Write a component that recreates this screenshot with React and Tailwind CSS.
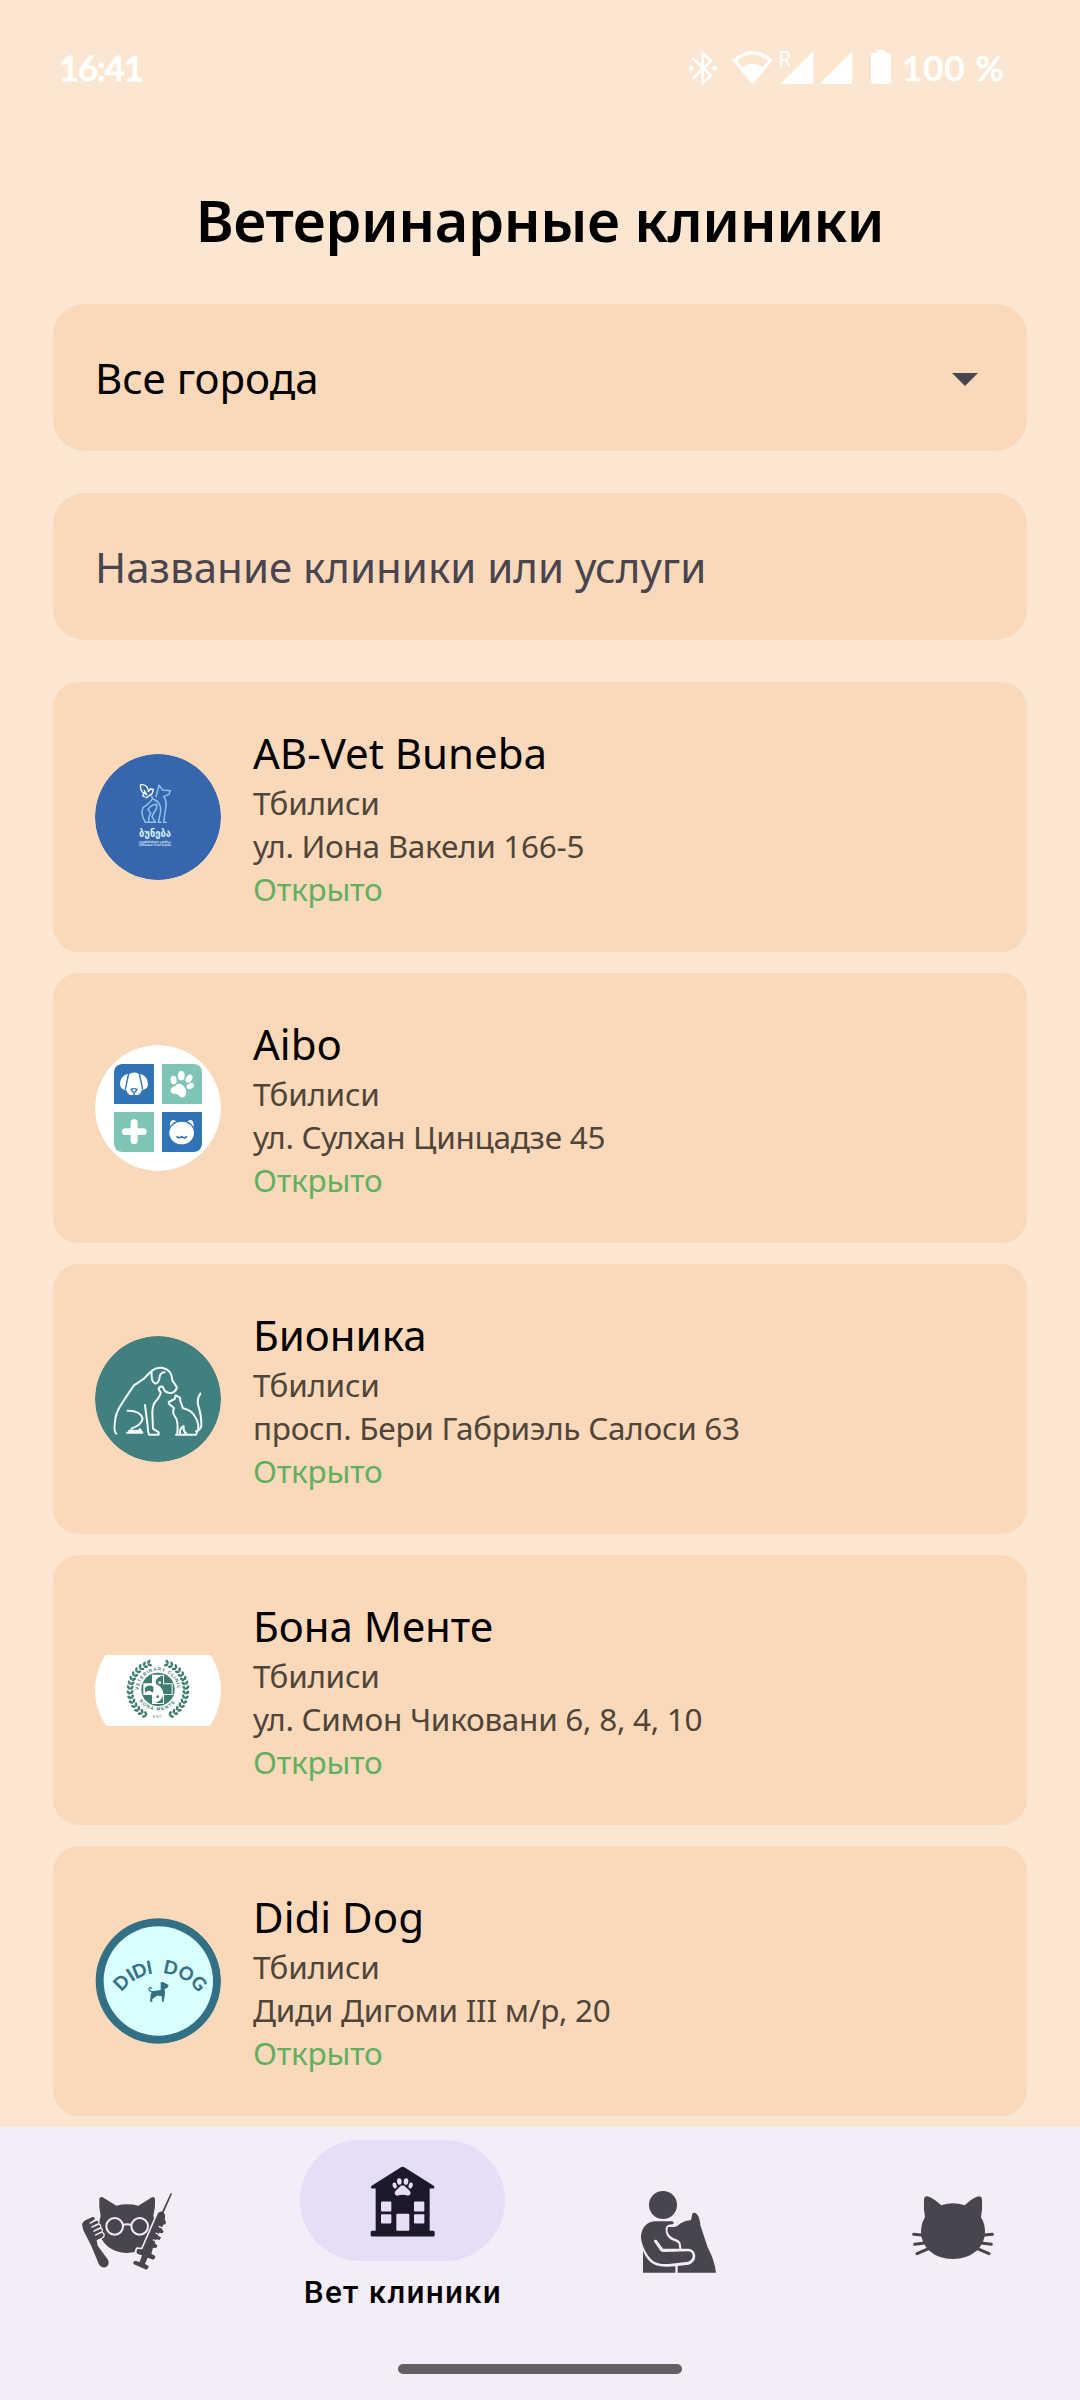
const NOTO = "font-['Noto_Sans',sans-serif]";

function StatusBar() {
  return (
    <div className="flex h-[136px] items-start pl-[59px] pt-[48px] font-['Lato',sans-serif] text-[34.5px] leading-[40px] text-white">
      <span className="w-[629px] font-semibold tracking-[-1px] [-webkit-text-stroke:0.9px_white]">16:41</span>
      <svg className="mt-[2px] h-[35px] w-[30px] shrink-0" viewBox="85 60 90 105" fill="none">
        <path d="M99 84L154 137L129 160V70L154 93L99 146" stroke="white" strokeWidth="8" />
        <circle cx="95" cy="115" r="7.5" fill="white" />
        <circle cx="165" cy="115" r="7.5" fill="white" />
      </svg>
      <svg className="ml-[14px] mt-[2px] h-[35px] w-[41px] shrink-0" viewBox="216 60 123 105" fill="none">
        <path d="M224 91Q277 45 331 91L278 155Z" stroke="white" strokeWidth="10" />
        <path d="M244 115Q277 88 312 115L278 161Z" fill="white" />
      </svg>
      <svg className="ml-[6px] h-[40px] w-[35px] shrink-0 overflow-visible" viewBox="356 54 105 120">
        <path d="M459 64V161H361Z" fill="white" />
        <text x="355" y="112" fontFamily="Roboto, sans-serif" fontSize="68" textLength="36" lengthAdjust="spacingAndGlyphs" fill="white">R</text>
      </svg>
      <svg className="ml-[5px] mt-[2px] h-[35px] w-[34px] shrink-0" viewBox="476 60 102 105">
        <path d="M576 64V161H478Z" fill="white" />
      </svg>
      <svg className="ml-[18px] mt-[2px] h-[35px] w-[20px] shrink-0" viewBox="633 60 60 105" fill="white">
        <path d="M651 60H675V69H686Q693 69 693 76V154Q693 161 686 161H640Q633 161 633 154V76Q633 69 640 69H651Z" />
      </svg>
      <span className="ml-[11px] whitespace-pre font-semibold tracking-[1.3px] [-webkit-text-stroke:0.7px_white]">100 %</span>
    </div>
  );
}

function Logo({ viewBox, children }) {
  return (
    <svg className="size-[126px] shrink-0 rounded-full" viewBox={viewBox}>
      {children}
    </svg>
  );
}

function BunebaLogo() {
  return (
    <Logo viewBox="45 42 378 378">
      <circle cx="234" cy="231" r="189" fill="#3766ac" />
      <g fill="none" stroke="#8cc4ee" strokeWidth="4.5" strokeLinejoin="round" strokeLinecap="round">
        <path d="M228 170L237 136L248 150L271 152L267 163L251 169Q262 185 257 205L251 247H258" />
        <path d="M214 168L220 178Q244 186 242 214L235 247H243" />
        <path d="M216 178Q209 190 190 202Q183 214 189 232L196 247H227L216 230L224 214Q232 206 230 193Q214 194 204 208L212 220Q203 235 207 247" />
      </g>
      <path d="M181 134Q204 132 205 155L211 147L220 148L217 160L206 168L197 175M181 134Q182 156 192 160L188 168L196 171M192 150L200 164L190 157" fill="none" stroke="white" strokeWidth="4" strokeLinejoin="round" />
      <g fill="#d8f0fb" fontFamily="DejaVu Sans, sans-serif">
        <text x="177" y="291" fontSize="33" fontWeight="bold" textLength="96" lengthAdjust="spacingAndGlyphs">ბუნება</text>
        <text x="177" y="309" fontSize="9" fontWeight="bold" textLength="96" lengthAdjust="spacingAndGlyphs">ვეტერინარული კლინიკა</text>
        <text x="177" y="318" fontSize="7" fontWeight="bold" textLength="96" lengthAdjust="spacingAndGlyphs">VETERINARY CLINIC BUNEBA</text>
      </g>
    </Logo>
  );
}

function AiboLogo() {
  return (
    <Logo viewBox="45 45 378 378">
      <circle cx="234" cy="234" r="189" fill="white" />
      <path d="M102 126Q104 104 126 102H222V222H102Z" fill="#3173b7" />
      <path d="M246 102H342Q364 104 366 126V222H246Z" fill="#7fc4b6" />
      <path d="M102 246H222V366H126Q104 364 102 342Z" fill="#7fc4b6" />
      <path d="M246 246H366V342Q364 364 342 366H246Z" fill="#3173b7" />
      <g fill="white">
        <path d="M147 133Q161 123 177 132L187 172Q186 187 175 195H148Q138 186 137 172Z" />
        <path d="M144 131Q120 137 120 162Q120 176 136 181ZM180 131Q204 137 204 162Q204 176 188 181Z" />
        <path d="M146 131L136 178M178 131L188 178" stroke="#3173b7" strokeWidth="4" />
        <path d="M153 178Q162 174 171 178Q168 186 162 187Q156 186 153 178ZM162 186V196" stroke="#3173b7" strokeWidth="4" />
        <ellipse cx="281" cy="150" rx="9" ry="13" transform="rotate(-8 281 150)" />
        <ellipse cx="304" cy="137" rx="10" ry="14" />
        <ellipse cx="327" cy="146" rx="9" ry="13" transform="rotate(35 327 146)" />
        <ellipse cx="331" cy="168" rx="8" ry="12" transform="rotate(60 331 168)" />
        <path d="M293 162Q307 159 313 172Q322 182 317 196Q310 207 300 200Q294 190 280 191Q269 187 273 176Q279 169 286 168Q289 163 293 162Z" />
        <rect x="152" y="268" width="21" height="74" rx="10" />
        <rect x="126" y="295" width="74" height="20" rx="10" />
        <path d="M269 294L271 277Q276 267 286 272L296 280ZM342 294L340 277Q335 267 325 272L315 280Z" />
        <ellipse cx="305" cy="309" rx="39" ry="36" stroke="#3173b7" strokeWidth="4" />
        <path d="M290 319Q296 327 305 320Q314 327 321 319" fill="none" stroke="#3173b7" strokeWidth="5" />
      </g>
    </Logo>
  );
}

function BionikaLogo() {
  return (
    <Logo viewBox="45 48 378 378">
      <circle cx="234" cy="237" r="189" fill="#42807f" />
      <g fill="none" stroke="#f3fbfa" strokeWidth="6" strokeLinecap="round" strokeLinejoin="round">
        <path d="M109 341Q102 338 104 313Q106 276 126 250Q147 217 162 196L193 175Q209 158 217 151Q231 141 249 144Q276 150 277 181L291 202Q285 220 269 219Q255 218 251 206Q247 195 238 202Q233 208 242 216Q242 227 228 243Q217 254 217 280L219 326L236 337V344H207Q203 334 203 318L195 255" />
        <path d="M215 155Q213 183 223 189Q236 196 240 166Q244 157 254 157" />
        <path d="M143 272Q181 271 188 296Q185 315 154 326M141 338H187L179 327M147 332H179" />
        <path d="M288 344H348Q365 316 342 285Q333 271 309 265L301 243L300 233L287 226L284 237L266 246L268 253L282 264Q275 277 287 293Q295 302 292 344M300 340Q299 324 311 318Q309 334 319 341M361 221Q351 236 354 254Q365 287 364 318Q359 333 348 334" />
      </g>
    </Logo>
  );
}

function BonaMenteLogo() {
  const leaves = Array.from({ length: 15 }, (_, i) => 18 + i * 9.6);
  return (
    <Logo viewBox="45 -9 378 378">
      <rect x="45" y="75" width="378" height="213" fill="white" />
      <g fill="#3f7d70">
        {leaves.map((a) => (
          <g key={a}>
            <g transform={`rotate(${a} 234 180)`}>
              <ellipse cx="234" cy="91" rx="7" ry="4" transform="rotate(38 234 91)" />
              <ellipse cx="234" cy="101" rx="7" ry="4" transform="rotate(-38 234 101)" />
            </g>
            <g transform={`rotate(${-a} 234 180)`}>
              <ellipse cx="234" cy="91" rx="7" ry="4" transform="rotate(-38 234 91)" />
              <ellipse cx="234" cy="101" rx="7" ry="4" transform="rotate(38 234 101)" />
            </g>
          </g>
        ))}
        <circle cx="234" cy="178" r="50" />
        <path d="M216 134H252V160H278V195H252V222H216V195H190V160H216Z" fill="white" />
        <path d="M219 137H244Q221 148 229 163Q250 173 250 192Q248 211 226 219H249V192H275V163H249V137Z" />
        <path d="M194 174Q207 162 220 170Q222 180 218 188Q206 177 196 188Z" />
        <circle cx="239" cy="158" r="4" fill="white" />
        <circle cx="233" cy="200" r="4" />
      </g>
      <path id="bona-top" d="M176 180A58 58 0 0 1 292 180" fill="none" />
      <path id="bona-bottom" d="M178 212A68 68 0 0 0 290 212" fill="none" />
      <g fill="#3f7d70" fontFamily="Liberation Sans, sans-serif" fontWeight="bold" fontSize="14">
        <text textLength="178"><textPath href="#bona-top">VETERINARY CLINIC</textPath></text>
        <text textLength="124"><textPath href="#bona-bottom">BONA MENTE</textPath></text>
        <text x="219" y="263" fontSize="11" fontWeight="normal" textLength="28">EST.</text>
      </g>
    </Logo>
  );
}

const DIDI_LETTERS = [["D", -45], ["I", -32.5], ["D", -22], ["I", -11], ["D", 12], ["O", 29.5], ["G", 46.5]];

function DidiDogLogo() {
  return (
    <Logo viewBox="45 54 378 378">
      <circle cx="235" cy="243" r="188" fill="#336f85" />
      <circle cx="235" cy="243" r="164" fill="#d9feff" />
      <g fill="#336f85" stroke="#336f85" strokeWidth="1.5" fontFamily="Lato, sans-serif" fontWeight="600" fontSize="54" textAnchor="middle">
        {DIDI_LETTERS.map(([letter, angle]) => (
          <text key={angle} x="239" y="219" transform={`rotate(${angle} 239 362)`}>{letter}</text>
        ))}
      </g>
      <path d="M242 247L249 246L266 255L263 263L254 267L255 281L251 305H246L245 288L231 287L217 297V305H210L212 285L216 274L242 270Z" fill="#336f85" />
      <path d="M219 276Q205 274 207 265Q211 260 216 266" fill="none" stroke="#336f85" strokeWidth="3.5" />
    </Logo>
  );
}

const CLINICS = [
  { name: "AB-Vet Buneba", address: "ул. Иона Вакели 166-5", Icon: BunebaLogo },
  { name: "Aibo", address: "ул. Сулхан Цинцадзе 45", Icon: AiboLogo },
  { name: "Бионика", address: "просп. Бери Габриэль Салоси 63", Icon: BionikaLogo },
  { name: "Бона Менте", address: "ул. Симон Чиковани 6, 8, 4, 10", Icon: BonaMenteLogo },
  { name: "Didi Dog", address: "Диди Дигоми III м/р, 20", Icon: DidiDogLogo },
];

function ClinicCard({ name, address, Icon }) {
  return (
    <li className="flex h-[270px] shrink-0 items-center gap-8 rounded-[26px] bg-[#fad9ba] px-[42px]">
      <Icon />
      <div className="text-[31.5px] leading-[43px] tracking-[-0.28px] text-[#504539]">
        <h2 className="text-[42px] leading-[57px] tracking-normal text-black">{name}</h2>
        <p>Тбилиси</p>
        <p>{address}</p>
        <p className="text-[#62b05f]">Открыто</p>
      </div>
    </li>
  );
}

function GroomingIcon() {
  return (
    <svg className="size-24" viewBox="117 252 288 288" fill="#49454f">
      <path d="M178 297Q179 289 188 292L229 317Q261 309 295 317L336 292Q344 289 345 297Q347 323 340 347L346 373Q345 409 330 427Q306 459 262 459Q211 458 187 421L175 374L182 348Q176 322 178 297Z" />
      <g fill="none" stroke="#f3edf7" strokeWidth="6">
        <circle cx="224" cy="379" r="25" />
        <circle cx="299" cy="379" r="25" />
        <path d="M249 374Q261 371 273 374" />
      </g>
      <path d="M126 374Q127 366 136 361L157 351Q165 350 165 357L151 368L169 362Q178 363 174 370L155 379L174 374Q182 375 180 382L162 390L180 386Q188 388 184 395L168 402L186 399Q193 402 189 410L170 421L173 437L204 479Q211 495 196 502Q183 504 176 491L154 438L130 391Z" stroke="#f3edf7" strokeWidth="8" paintOrder="stroke" />
      <path d="M149 370L165 362M154 382L174 373M160 394L180 385M165 406L185 396" stroke="#f3edf7" strokeWidth="4" />
      <path d="M392 279L396 281L371 338Q378 343 374 359Q380 364 376 373L369 374L366 387L371 395L367 400L358 398L354 407L363 412L359 420L349 418L344 430L352 436L349 444L339 443L334 461L346 468Q347 476 340 479L323 473L315 492L326 498Q326 507 319 509L280 492Q278 485 285 482L299 486L306 466L291 461Q287 453 292 447L307 448L354 340Q360 333 366 335Z" stroke="#f3edf7" strokeWidth="10" paintOrder="stroke" />
      <path d="M356 379L369 385M347 399L360 405M339 419L351 425" stroke="#f3edf7" strokeWidth="4" />
    </svg>
  );
}

function ClinicIcon() {
  return (
    <svg className="size-24" viewBox="943 157.5 288 288" fill="#1d192b">
      <path d="M1084 200Q1089 197 1094 200L1182 256Q1187 261 1182 264H1170V391H1181Q1185 392 1185 396V404Q1185 408 1181 408H997Q993 408 993 404V396Q993 392 997 391H1008V264H996Q991 261 996 256Z" />
      <g fill="#e6def7">
        <rect x="1024" y="303" width="31" height="30" rx="3" />
        <rect x="1123" y="303" width="31" height="30" rx="3" />
        <rect x="1024" y="341" width="31" height="28" rx="3" />
        <rect x="1123" y="341" width="31" height="28" rx="3" />
        <rect x="1070" y="340" width="39" height="51" rx="3" />
        <ellipse cx="1065" cy="255" rx="6" ry="9" transform="rotate(-15 1065 255)" />
        <ellipse cx="1079" cy="243" rx="7" ry="10" transform="rotate(-5 1079 243)" />
        <ellipse cx="1099" cy="243" rx="7" ry="10" transform="rotate(5 1099 243)" />
        <ellipse cx="1113" cy="255" rx="6" ry="9" transform="rotate(15 1113 255)" />
        <path d="M1079 260Q1089 249 1099 260L1110 271Q1118 282 1105 286Q1089 280 1073 286Q1060 282 1068 271Z" />
      </g>
    </svg>
  );
}

function OwnerIcon() {
  return (
    <svg className="size-24" viewBox="210 252 288 288" fill="#49454f">
      <circle cx="309" cy="315" r="42" />
      <path d="M249 453Q262 486 288 496Q304 502 346 499V518H249Z" />
      <path d="M284 364H337Q342 366 341 372L326 374Q317 377 317 388Q316 406 331 418L354 428Q358 435 358 446H309L290 420Q284 417 281 423L300 451Q303 456 310 456L386 454Q398 456 398 468Q397 481 384 485L326 492Q294 494 279 483Q262 468 251 443Q242 422 243 406Q249 368 284 364Z" />
      <path d="M324 381H344Q353 379 362 370Q376 361 393 360L397 341Q403 335 410 342Q420 352 421 376L443 442Q464 482 468 518H353V498L386 494Q406 487 406 467Q404 449 386 446H364Q364 424 353 419Q326 412 322 393Z" />
    </svg>
  );
}

function CatIcon() {
  return (
    <svg className="size-24" viewBox="1035 252 288 288" fill="#49454f">
      <path d="M1092 299Q1093 289 1101 289Q1115 290 1144 316Q1179 304 1214 316Q1242 290 1257 289Q1265 289 1266 299Q1268 326 1263 352Q1275 370 1275 396Q1275 428 1249 453Q1220 477 1179 477Q1136 477 1109 453Q1083 430 1083 396Q1083 371 1095 352Q1090 325 1092 299Z" />
      <path d="M1061 403L1092 406M1064 433L1094 429M1071 461L1106 446M1297 403L1266 406M1294 433L1264 429M1287 461L1252 446" stroke="#49454f" strokeWidth="9" strokeLinecap="round" />
    </svg>
  );
}

function BottomNav() {
  return (
    <nav className="flex h-[273px] shrink-0 flex-col items-center bg-[#f3edf7]">
      <ul className="grid h-[210px] w-full grid-cols-4 gap-x-[21px]">
        <li className="flex items-center justify-center"><GroomingIcon /></li>
        <li className="flex flex-col items-center pt-[13px]">
          <div className="flex h-[121px] w-[205px] items-center justify-center rounded-full bg-[#e6def6]">
            <ClinicIcon />
          </div>
          <span className="ml-px mt-[11px] whitespace-nowrap font-['Roboto',sans-serif] text-[31.5px] font-medium leading-[42px] tracking-[1.2px] text-black">Вет клиники</span>
        </li>
        <li className="flex items-center justify-center"><OwnerIcon /></li>
        <li className="flex items-center justify-center"><CatIcon /></li>
      </ul>
      <div className="mt-[27px] h-[10px] w-[284px] rounded-full bg-[#625f63]" />
    </nav>
  );
}

export default function App() {
  return (
    <div className={`${NOTO} flex h-[2400px] w-[1080px] flex-col overflow-hidden bg-[#fbe6d1]`}>
      <StatusBar />
      <main className="flex min-h-0 flex-1 flex-col overflow-hidden px-[53px]">
        <h1 className="mt-[44px] h-[79px] text-center text-[57.75px] font-semibold leading-[79px] tracking-[-0.42px] text-black">Ветеринарные клиники</h1>
        <div className="mt-[45px] flex h-[147px] shrink-0 items-center justify-between rounded-[32px] bg-[#fad9ba] pl-[42px] pr-[49px] text-[42px] text-black">
          <span>Все города</span>
          <svg className="mt-[4px] h-[13px] w-[26px]" viewBox="0 0 26 13" fill="#49454f"><path d="M0 0H26L13 13Z" /></svg>
        </div>
        <div className="mt-[42px] flex h-[147px] shrink-0 items-center rounded-[32px] bg-[#fad9ba] px-[42px] text-[42px] text-[#49454f]">
          Название клиники или услуги
        </div>
        <ul className="mt-[42px] flex flex-col gap-[21px]">
          {CLINICS.map((clinic) => <ClinicCard key={clinic.name} {...clinic} />)}
        </ul>
      </main>
      <BottomNav />
    </div>
  );
}
